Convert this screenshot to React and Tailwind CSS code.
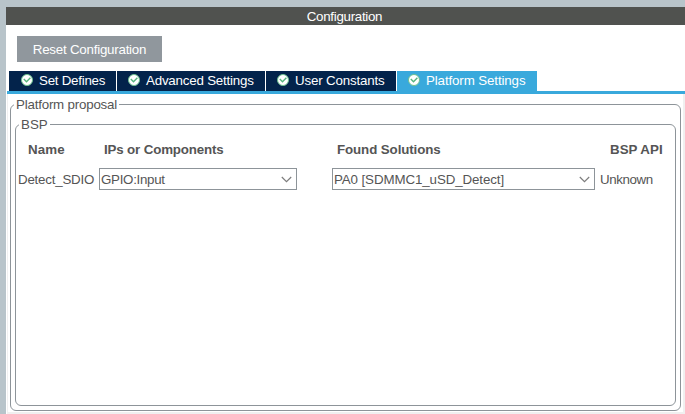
function CheckIcon() {
  return (
    <svg width="12" height="12" viewBox="0 0 12 12" className="block shrink-0">
      <circle cx="6" cy="6" r="5.5" fill="#fff" stroke="#6cc28f" strokeWidth="1" />
      <path d="M2.8 5 5.5 7.7 9.4 3.8" fill="none" stroke="#55b57d" strokeWidth="1.4" />
    </svg>
  );
}

function Tab({ label, className }) {
  return (
    <div className={`flex h-5 shrink-0 items-center pb-0.5 text-white ${className}`}>
      <CheckIcon />
      <span className="ml-1.5">{label}</span>
    </div>
  );
}

function Select({ value, className }) {
  return (
    <div className={`flex h-[22px] shrink-0 items-center justify-between border border-[#8d9499] bg-white pl-px pr-[4px] ${className}`}>
      <span>{value}</span>
      <svg width="11" height="7" viewBox="0 0 11 7" className="block shrink-0">
        <path d="M0.8 1 5.5 5.6 10.2 1" fill="none" stroke="#7d7d7d" strokeWidth="1.2" />
      </svg>
    </div>
  );
}

export default function App() {
  return (
    <div className="h-[414px] w-[685px] overflow-hidden whitespace-nowrap bg-[#b8c4ca] pl-1.5 pt-[7px] font-['Liberation_Sans',Arial,sans-serif] text-[13.33px] leading-[17px] text-[#555]">
      <div className="flex h-full flex-col bg-white">
        <header className="flex h-[18px] shrink-0 items-center justify-center bg-[#50524f] pr-[2px] text-white">
          <span className="tracking-[-0.3px]">Configuration</span>
        </header>
        <div className="h-[46px] shrink-0 pl-[11px] pt-[11px]">
          <button className="flex h-[26px] w-[145px] items-center justify-center bg-[#90979d] text-white">
            <span className="tracking-[-0.23px]">Reset Configuration</span>
          </button>
        </div>
        <nav className="flex h-5 shrink-0 gap-px pl-[3px]">
          <Tab label="Set Defines" className="w-[107px] bg-[#03234b] pl-3 tracking-[-0.25px]" />
          <Tab label="Advanced Settings" className="w-[148px] bg-[#03234b] pl-[11px] tracking-[-0.2px]" />
          <Tab label="User Constants" className="w-[130px] bg-[#03234b] pl-[11px] tracking-[-0.17px]" />
          <Tab label="Platform Settings" className="w-[140px] bg-[#39a9dc] pl-[11px] tracking-[-0.12px]" />
        </nav>
        <div className="ml-px h-[3px] shrink-0 bg-[#39a9dc]" />
        <main className="ml-px flex min-h-0 flex-1 border-b-2 border-l border-r-2 border-[#f0f0f0] pb-px pl-0.5 pr-0.5 pt-0.5">
          <fieldset className="h-[315px] w-[671px] min-w-0 rounded-md border border-[#8d9499] px-1 pb-1">
            <legend className="ml-[-1px] h-[17px] pl-0.5 pr-0.5 tracking-[-0.2px]">Platform proposal</legend>
            <fieldset className="mt-[3px] h-[290px] w-[661px] min-w-0 rounded-md border border-[#8d9499]">
              <legend className="ml-[3px] h-[17px] pl-0.5 pr-0.5">BSP</legend>
              <div className="mt-2 flex h-[17px] font-bold">
                <span className="ml-3 w-[76px] tracking-[0.1px]">Name</span>
                <span className="w-[233px] tracking-[-0.15px]">IPs or Components</span>
                <span className="w-[273px] tracking-[-0.1px]">Found Solutions</span>
                <span>BSP API</span>
              </div>
              <div className="mt-2.5 flex items-center">
                <span className="ml-0.5 w-[81px] tracking-[-0.22px]">Detect_SDIO</span>
                <Select value="GPIO:Input" className="w-[198px] tracking-[-0.3px]" />
                <Select value="PA0 [SDMMC1_uSD_Detect]" className="ml-[35px] w-[263px] tracking-[-0.1px]" />
                <span className="ml-[5px] tracking-[-0.4px]">Unknown</span>
              </div>
            </fieldset>
          </fieldset>
        </main>
      </div>
    </div>
  );
}
